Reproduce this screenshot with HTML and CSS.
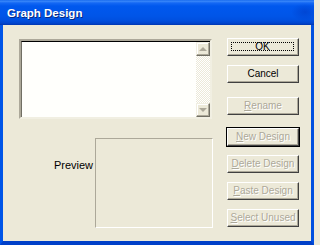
FILE: index.html
```html
<!DOCTYPE html>
<html>
<head>
<meta charset="utf-8">
<link rel="stylesheet" href="styles.css">
</head>
<body>
<div class="window">
  <div class="titlebar"><span class="title">Graph Design</span></div>
  <div class="frame">
    <div class="client">
      <div class="left">
        <div class="listbox">
          <div class="list-area"></div>
          <div class="scrollbar">
            <div class="sb-btn"><span class="arrow-up"></span></div>
            <div class="sb-track"></div>
            <div class="sb-btn"><span class="arrow-down"></span></div>
          </div>
        </div>
        <div class="preview-row">
          <span class="preview-label">Preview</span>
          <div class="preview-box"></div>
        </div>
      </div>
      <div class="buttons">
        <div class="btn"><span class="focus">OK</span></div>
        <div class="btn">Cancel</div>
        <div class="btn disabled gap-a"><span><u>R</u>ename</span></div>
        <div class="btn disabled default gap-b"><span><u>N</u>ew Design</span></div>
        <div class="btn disabled"><span><u>D</u>elete Design</span></div>
        <div class="btn disabled"><span><u>P</u>aste Design</span></div>
        <div class="btn disabled"><span><u>S</u>elect Unused</span></div>
      </div>
    </div>
  </div>
</div>
</body>
</html>
```
FILE: styles.css
```css
html, body {
  margin: 0;
  padding: 0;
}
body {
  width: 314px;
  height: 245px;
  overflow: hidden;
  background: #ECE9D8;
  font-family: "Liberation Sans", Arial, sans-serif;
}
.window {
  width: 314px;
  height: 245px;
  display: flex;
  flex-direction: column;
}
.titlebar {
  height: 25px;
  flex: none;
  display: flex;
  align-items: center;
  padding-left: 7px;
  background:
    radial-gradient(ellipse 14px 9px at 305px 12px, rgba(0,40,170,0.35), rgba(0,40,170,0) 100%),
    linear-gradient(to bottom, #0A5EEA 0px, #3D8BFA 1px, #1468F4 3px, #0058EE 6px, #0055E8 16px, #0050E0 20px, #0046D0 23px, #0035B0 25px);
}
.title {
  color: #fff;
  font-weight: bold;
  font-size: 11.5px;
  text-shadow: 1px 1px 0 #0A2A80;
  margin-top: 1px;
}
.frame {
  flex: 1;
  display: flex;
  border-left: 3px solid #0055E8;
  border-right: 3px solid #0050E0;
  border-bottom: 4px solid #0040C8;
  box-shadow: inset 0 -1px 0 #0030A0;
}
.client {
  flex: 1;
  display: flex;
  background: #ECE9D8;
}
.left {
  width: 194px;
  padding-left: 16px;
  padding-top: 14px;
  display: flex;
  flex-direction: column;
}
.listbox {
  width: 189px;
  height: 76px;
  display: flex;
  border-style: solid;
  border-width: 2px;
  border-color: #ACA899 #F1EFE2 #F1EFE2 #ACA899;
  background: #fff;
}
.list-area {
  flex: 1;
  border-top: 1px solid #000;
  border-left: 1px solid #716F64;
  background: #FFFFFC;
}
.scrollbar {
  width: 14px;
  display: flex;
  flex-direction: column;
  border-top: 1px solid #000;
}
.sb-btn {
  height: 12px;
  background: #ECE9D8;
  border: 1px solid;
  border-color: #F1EFE2 #716F64 #716F64 #F1EFE2;
  box-shadow: inset -1px -1px 0 #ACA899, inset 1px 1px 0 #fff;
  display: flex;
  align-items: center;
  justify-content: center;
}
.sb-track {
  flex: 1;
  background-color: #fff;
  background-image: repeating-conic-gradient(#ECE9D8 0 25%, #fff 0 50%);
  background-size: 2px 2px;
}
.arrow-up {
  width: 0;
  height: 0;
  border-left: 4px solid transparent;
  border-right: 4px solid transparent;
  border-bottom: 4px solid #ACA899;
}
.arrow-down {
  width: 0;
  height: 0;
  border-left: 4px solid transparent;
  border-right: 4px solid transparent;
  border-top: 4px solid #ACA899;
}
.preview-row {
  margin-top: 19px;
  display: flex;
  justify-content: flex-end;
  gap: 2px;
  width: 194px;
}
.preview-label {
  font-size: 11px;
  color: #000;
  margin-top: 21px;
  line-height: 13px;
}
.preview-box {
  width: 116px;
  height: 88px;
  border: 1px solid;
  border-color: #ACA899 #fff #fff #ACA899;
}
.buttons {
  margin-left: 14px;
  padding-top: 13px;
  display: flex;
  flex-direction: column;
  gap: 9px;
}
.btn {
  width: 70px;
  height: 16px;
  box-sizing: content-box;
  border: 1px solid;
  border-color: #fff #404040 #404040 #fff;
  box-shadow: inset -1px -1px 0 #ACA899;
  background: #ECE9D8;
  display: flex;
  align-items: center;
  justify-content: center;
  font-size: 10px;
  color: #000;
  line-height: 12px;
  position: relative;
  white-space: nowrap;
}
.btn u {
  text-decoration: underline;
}
.focus {
  position: absolute;
  left: 3px;
  top: 3px;
  right: 4px;
  bottom: 4px;
  border: 1px dotted #000;
  display: flex;
  align-items: center;
  justify-content: center;
}
.btn.disabled {
  color: #ACA899;
  text-shadow: 1px 1px 0 #fff;
}
.btn.default {
  outline: 1px solid #000;
}
.gap-a {
  margin-top: 5px;
}
.gap-b {
  margin-top: 4px;
}
```
